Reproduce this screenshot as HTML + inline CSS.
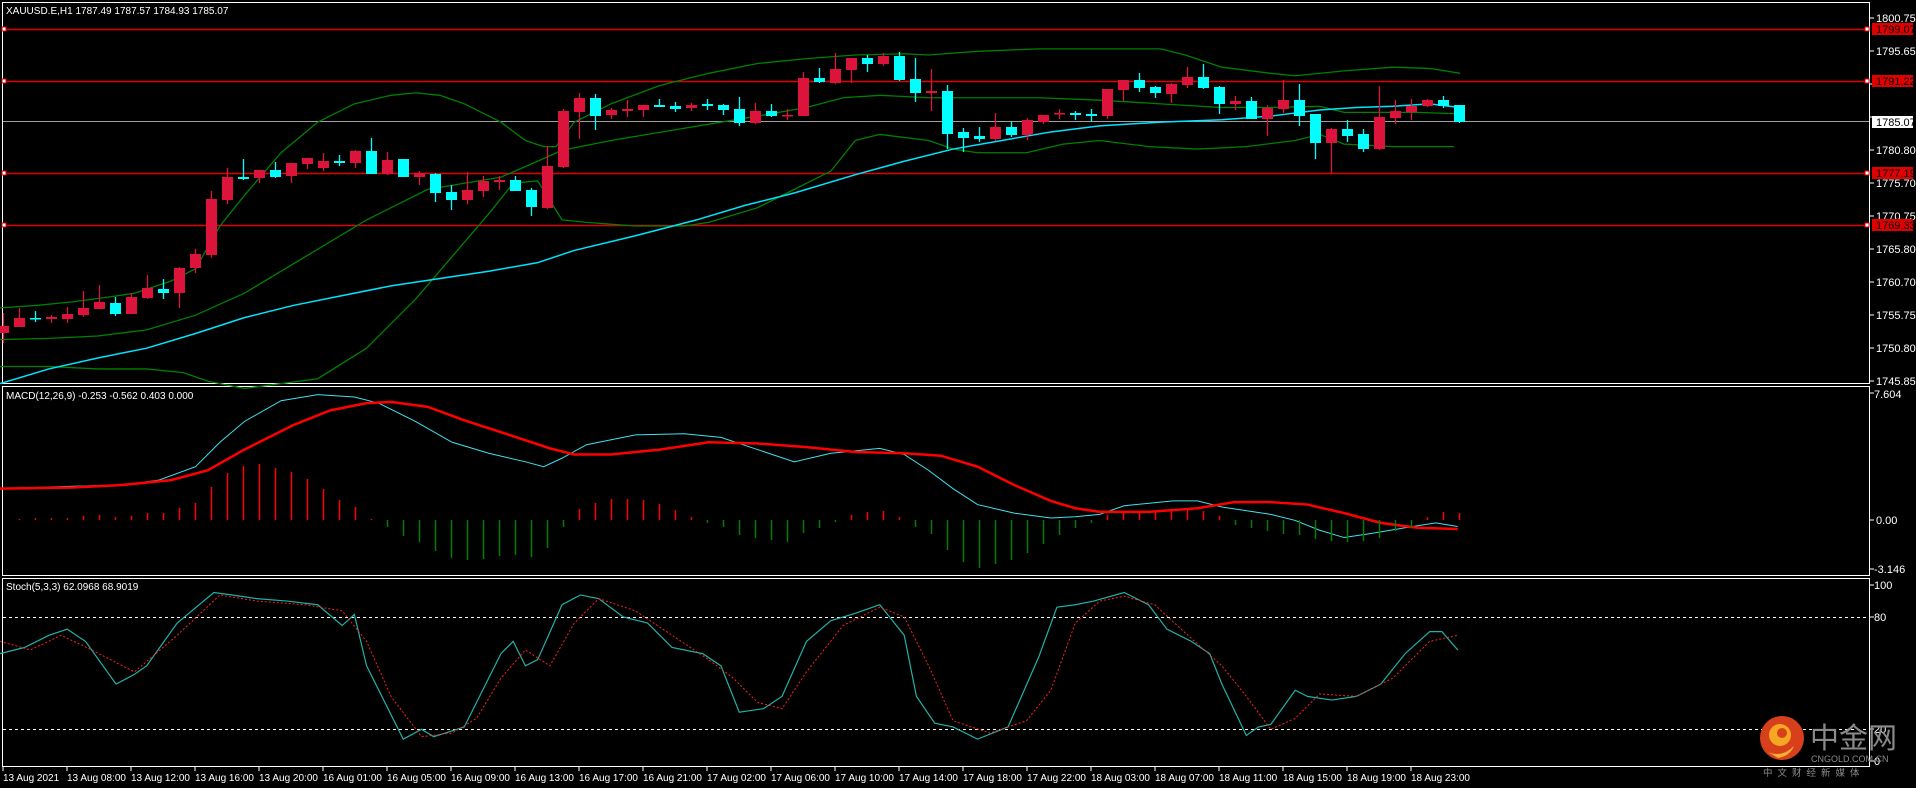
<!DOCTYPE html>
<html><head><meta charset="utf-8"><style>
html,body{margin:0;padding:0;background:#000;width:1916px;height:788px;overflow:hidden}
svg{display:block}
text{font-family:"Liberation Sans","Noto Sans CJK SC",sans-serif;font-size:11px;fill:#fff}
</style></head><body>
<svg width="1916" height="788" viewBox="0 0 1916 788" xmlns="http://www.w3.org/2000/svg">
<rect width="1916" height="788" fill="#000"/>
<g fill="none" stroke="#fff" stroke-width="1">
<rect x="2.5" y="2.5" width="1867" height="381"/>
<rect x="2.5" y="386.5" width="1867" height="189"/>
<rect x="2.5" y="578.5" width="1867" height="188"/>
</g>
<g stroke="#e00000" stroke-width="1.5">
<line x1="3" y1="29.5" x2="1869" y2="29.5"/>
<line x1="3" y1="81.5" x2="1869" y2="81.5"/>
<line x1="3" y1="173.5" x2="1869" y2="173.5"/>
<line x1="3" y1="225.5" x2="1869" y2="225.5"/>
</g>
<line x1="3" y1="121.5" x2="1869" y2="121.5" stroke="#a0a0a0" stroke-width="1"/>
<g fill="#fff" stroke="#e00000" stroke-width="1">
<rect x="2" y="27" width="4" height="4"/><rect x="2" y="79" width="4" height="4"/><rect x="2" y="171" width="4" height="4"/><rect x="2" y="223" width="4" height="4"/>
<rect x="1865" y="27" width="4" height="4"/><rect x="1865" y="79" width="4" height="4"/><rect x="1865" y="171" width="4" height="4"/><rect x="1865" y="223" width="4" height="4"/>
</g>
<g stroke="#fff" stroke-dasharray="3,3" stroke-width="1">
<line x1="3" y1="617.5" x2="1869" y2="617.5"/>
<line x1="3" y1="729.5" x2="1869" y2="729.5"/>
</g>

<g transform="scale(1.2219,1.2217)" fill="none">
<polyline vector-effect="non-scaling-stroke" stroke="#008000" stroke-width="1.3" points="0,252 30,250 60,247 90,243 110,240 140,230 160,220 180,185 200,160 230,125 260,100 290,85 320,78 340,76 360,78 380,85 410,100 430,115 445,120 455,120 470,100 500,85 540,70 580,60 620,52 660,48 700,45 740,44 760,45 800,42 850,40 900,40 950,40 970,45 1000,55 1040,60 1060,62 1100,58 1140,55 1170,56 1195,60"/>
<polyline vector-effect="non-scaling-stroke" stroke="#008000" stroke-width="1.3" points="0,278 40,277 80,275 120,270 160,258 200,240 250,210 300,180 350,155 380,150 410,145 440,132 460,123 500,115 560,105 620,95 660,88 690,80 720,78 760,80 800,80 850,80 900,82 950,85 1000,88 1040,88 1080,87 1100,92 1140,92 1160,92 1190,93"/>
<polyline vector-effect="non-scaling-stroke" stroke="#008000" stroke-width="1.3" points="0,300 40,300 80,302 120,302 150,305 170,312 200,318 260,310 300,285 340,245 370,210 400,175 420,150 440,148 460,180 480,182 520,185 560,185 580,182 620,170 650,155 680,140 700,115 720,110 760,115 780,122 800,125 840,125 870,118 900,115 940,120 980,122 1020,120 1060,115 1080,110 1100,118 1140,120 1190,120"/>
<polyline vector-effect="non-scaling-stroke" stroke="#00e5ff" stroke-width="1.5" points="0,314 40,302 80,293 120,285 160,273 200,260 240,250 280,242 320,234 360,228 400,222 440,215 470,205 520,193 570,180 610,168 650,158 700,143 740,132 780,122 820,115 860,108 900,103 950,100 1000,98 1040,95 1080,90 1110,88 1140,87 1170,85 1195,88"/>
<polyline vector-effect="non-scaling-stroke" stroke="#40e0f0" stroke-width="1" points="0,400 60,398 100,397 130,393 160,382 180,362 200,345 230,328 260,323 290,325 310,330 340,345 370,362 400,371 430,378 445,382 460,375 480,364 520,356 560,355 590,358 620,368 650,378 680,371 720,367 740,372 760,385 780,400 800,413 830,420 860,424 880,423 900,421 920,414 960,410 980,410 1000,415 1040,421 1060,426 1080,434 1100,440 1120,437 1150,432 1175,428 1193,431"/>
<polyline vector-effect="non-scaling-stroke" stroke="#ff0000" stroke-width="2.5" points="0,400 60,399 100,397 140,393 170,385 200,368 240,348 270,336 300,330 320,329 350,333 380,344 420,357 450,367 470,372 500,372 540,368 580,362 620,363 660,366 700,370 740,371 770,373 800,382 830,397 860,410 880,416 900,419 940,419 980,416 1010,411 1040,411 1070,413 1100,420 1130,428 1160,432 1193,433"/>
<polyline vector-effect="non-scaling-stroke" stroke="#20b2aa" stroke-width="1.2" points="0,535 20,530 40,520 55,515 70,525 95,560 110,552 120,545 145,510 175,485 190,487 210,490 235,492 260,495 280,512 290,503 300,545 330,605 345,597 355,603 380,595 395,565 410,535 420,525 430,545 440,540 460,495 475,487 490,490 510,505 530,510 550,530 575,535 590,545 605,583 625,580 640,570 660,525 680,508 700,502 720,495 740,520 750,570 765,592 780,595 800,605 825,595 850,538 865,497 880,495 895,492 920,485 940,495 955,515 975,525 990,535 1000,560 1020,602 1030,595 1040,593 1060,565 1070,570 1090,573 1110,570 1130,560 1150,535 1170,517 1180,517 1193,532"/>
<polyline vector-effect="non-scaling-stroke" stroke="#ff2020" stroke-width="1" stroke-dasharray="2,2" points="0,525 25,532 50,520 75,532 110,550 145,520 180,487 210,492 250,495 280,500 300,525 320,570 345,603 370,600 390,588 410,555 430,532 450,545 470,510 490,490 520,500 550,520 580,540 600,555 620,575 640,580 660,550 690,512 720,497 740,505 760,545 780,590 810,600 840,590 860,565 880,510 900,492 920,488 945,495 970,518 1000,545 1020,570 1040,597 1060,588 1080,568 1110,570 1140,555 1170,525 1193,520"/>
</g>

<path stroke="#dc143c" stroke-width="1.3" fill="none" d="M3.5 313V343M19.5 308V327M51.5 315V323M67.5 307V323M83.5 291V317M99.5 285V309M131.5 293V314M147.5 275V299M179.5 267V308M195.5 249V273M211.5 191V258M227.5 168V204M259.5 170V183M291.5 163V183M307.5 158V169M323.5 153V171M355.5 150V168M387.5 152V175M419.5 171V185M467.5 172V204M483.5 176V197M499.5 176V190M547.5 146V209M563.5 109V168M579.5 93V139M611.5 108V119M627.5 100V117M643.5 105V117M691.5 103V111M755.5 103V124M787.5 109V120M803.5 72V116M835.5 53V84M851.5 58V83M883.5 53V66M931.5 69V111M995.5 113V141M1027.5 118V140M1043.5 115V124M1059.5 109V119M1107.5 89V119M1123.5 80V101M1171.5 83V103M1187.5 67V88M1235.5 96V110M1267.5 105V136M1283.5 80V113M1331.5 128V173M1379.5 86V150M1395.5 100V124M1411.5 99V120M1427.5 99V107"/>
<path fill="#dc143c" d="M-2 326h11v7h-11zM14 318h11v9h-11zM46 317h11v2h-11zM62 314h11v5h-11zM78 308h11v7h-11zM94 302h11v7h-11zM126 297h11v17h-11zM142 288h11v10h-11zM174 268h11v25h-11zM190 254h11v14h-11zM206 199h11v56h-11zM222 177h11v23h-11zM254 170h11v8h-11zM286 163h11v13h-11zM302 158h11v6h-11zM318 161h11v7h-11zM350 151h11v12h-11zM382 160h11v14h-11zM414 173h11v4h-11zM462 190h11v10h-11zM478 181h11v10h-11zM494 180h11v2h-11zM542 166h11v42h-11zM558 111h11v56h-11zM574 98h11v14h-11zM606 110h11v5h-11zM622 109h11v2h-11zM638 105h11v5h-11zM686 105h11v3h-11zM750 111h11v12h-11zM782 115h11v1.5h-11zM798 78h11v38h-11zM830 69h11v14h-11zM846 58h11v12h-11zM878 56h11v8h-11zM926 91h11v2h-11zM990 127h11v12h-11zM1022 120h11v15h-11zM1038 115h11v7h-11zM1054 113h11v1.5h-11zM1102 89h11v27h-11zM1118 80h11v10h-11zM1166 84h11v10h-11zM1182 77h11v8h-11zM1230 101h11v3h-11zM1262 108h11v11h-11zM1278 100h11v9h-11zM1326 129h11v14h-11zM1374 117h11v32h-11zM1390 111h11v7h-11zM1406 106h11v6h-11zM1422 100h11v6h-11z"/>
<path stroke="#00ffff" stroke-width="1.3" fill="none" d="M35.5 311V322M115.5 297V316M163.5 279V299M243.5 159V180M275.5 162V178M339.5 155V166M371.5 138V174M403.5 159V177M435.5 173V202M451.5 185V210M515.5 176V191M531.5 188V216M595.5 94V130M659.5 99V107M675.5 102V112M707.5 99V110M723.5 104V115M739.5 97V126M771.5 104V117M819.5 68V83M867.5 55V72M899.5 52V81M915.5 58V102M947.5 85V149M963.5 128V152M979.5 127V142M1011.5 122V137M1075.5 111V120M1091.5 109V122M1139.5 73V92M1155.5 86V98M1203.5 64V89M1219.5 86V114M1251.5 97V119M1299.5 84V126M1315.5 114V159M1347.5 120V142M1363.5 129V152M1443.5 96V108M1459.5 105V123"/>
<path fill="#00ffff" d="M30 318h11v1.5h-11zM110 303h11v11h-11zM158 289h11v4h-11zM238 177h11v2h-11zM270 170h11v7h-11zM334 161h11v2h-11zM366 151h11v23h-11zM398 159h11v18h-11zM430 174h11v19h-11zM446 192h11v8h-11zM510 180h11v11h-11zM526 190h11v17h-11zM590 98h11v18h-11zM654 105h11v2h-11zM670 106h11v3h-11zM702 104h11v2h-11zM718 105h11v5h-11zM734 109h11v14h-11zM766 111h11v5h-11zM814 78h11v4h-11zM862 58h11v6h-11zM894 56h11v24h-11zM910 79h11v14h-11zM942 91h11v43h-11zM958 132h11v6h-11zM974 136h11v3h-11zM1006 127h11v8h-11zM1070 113h11v2h-11zM1086 114h11v2h-11zM1134 80h11v8h-11zM1150 87h11v6h-11zM1198 77h11v11h-11zM1214 87h11v17h-11zM1246 101h11v18h-11zM1294 100h11v16h-11zM1310 114h11v29h-11zM1342 129h11v7h-11zM1358 134h11v15h-11zM1438 100h11v6h-11zM1454 105h11v17h-11z"/>

<path stroke="#ff0000" stroke-width="1.5" d="M19.5 520V519M35.5 520V518M51.5 520V518M67.5 520V518M83.5 520V516M99.5 520V515M115.5 520V517M131.5 520V516M147.5 520V513M163.5 520V513M179.5 520V508M195.5 520V503M211.5 520V487M227.5 520V473M243.5 520V466M259.5 520V464M275.5 520V468M291.5 520V472M307.5 520V479M323.5 520V489M339.5 520V500M355.5 520V507M371.5 520V519M579.5 520V509M595.5 520V503M611.5 520V499M627.5 520V499M643.5 520V500M659.5 520V504M675.5 520V510M691.5 520V517M851.5 520V515M867.5 520V512M883.5 520V511M899.5 520V517M1107.5 520V515M1123.5 520V511M1139.5 520V512M1155.5 520V511M1171.5 520V511M1187.5 520V510M1203.5 520V511M1219.5 520V516M1427.5 520V517M1443.5 520V512M1459.5 520V513"/>
<path stroke="#008000" stroke-width="1.5" d="M387.5 520V527M403.5 520V536M419.5 520V542M435.5 520V551M451.5 520V558M467.5 520V560M483.5 520V559M499.5 520V556M515.5 520V555M531.5 520V557M547.5 520V548M563.5 520V527M707.5 520V523M723.5 520V527M739.5 520V535M755.5 520V538M771.5 520V540M787.5 520V542M803.5 520V533M819.5 520V528M835.5 520V522M915.5 520V527M931.5 520V534M947.5 520V550M963.5 520V562M979.5 520V568M995.5 520V564M1011.5 520V560M1027.5 520V553M1043.5 520V544M1059.5 520V535M1075.5 520V528M1091.5 520V523M1235.5 520V525M1251.5 520V528M1267.5 520V531M1283.5 520V534M1299.5 520V535M1315.5 520V539M1331.5 520V541M1347.5 520V542M1363.5 520V541M1379.5 520V538M1395.5 520V531M1411.5 520V528"/>

<g stroke="#fff" stroke-width="1">
<path d="M1870 18h4M1870 51h4M1870 84h4M1870 117h4M1870 150h4M1870 183h4M1870 216h4M1870 249h4M1870 282h4M1870 315h4M1870 348h4M1870 381h4M1870 393h4M1870 520h4M1870 569h4M1870 585h4M1870 617h4M1870 729h4M1870 761h4"/>
<path d="M3 767v4M67 767v4M131 767v4M195 767v4M259 767v4M323 767v4M387 767v4M451 767v4M515 767v4M579 767v4M643 767v4M707 767v4M771 767v4M835 767v4M899 767v4M963 767v4M1027 767v4M1091 767v4M1155 767v4M1219 767v4M1283 767v4M1347 767v4M1411 767v4"/>
</g>
<g>
<text x="1876" y="22">1800.75</text>
<text x="1876" y="55">1795.65</text>
<text x="1876" y="154">1780.80</text>
<text x="1876" y="187">1775.70</text>
<text x="1876" y="220">1770.75</text>
<text x="1876" y="253">1765.80</text>
<text x="1876" y="286">1760.70</text>
<text x="1876" y="319">1755.75</text>
<text x="1876" y="352">1750.80</text>
<text x="1876" y="385">1745.85</text>
</g>
<rect x="1872" y="23" width="41" height="12" fill="#e00000"/><text x="1876" y="33" style="fill:#000">1799.07</text>
<rect x="1872" y="75" width="41" height="12" fill="#e00000"/><text x="1876" y="85" style="fill:#000">1791.22</text>
<rect x="1872" y="116" width="41" height="12" fill="#fff"/><text x="1876" y="126" style="fill:#000">1785.07</text>
<rect x="1872" y="167" width="41" height="12" fill="#e00000"/><text x="1876" y="177" style="fill:#000">1777.19</text>
<rect x="1872" y="219" width="41" height="12" fill="#e00000"/><text x="1876" y="229" style="fill:#000">1769.33</text>
<text x="1874" y="398">7.604</text>
<text x="1876" y="524">0.00</text>
<text x="1874" y="573">-3.146</text>
<text x="1874" y="589">100</text>
<text x="1874" y="621">80</text>
<text x="1874" y="733">20</text>
<text x="1874" y="765">0</text>
<text x="6" y="14" style="font-size:10px">XAUUSD.E,H1  1787.49 1787.57 1784.93 1785.07</text>
<text x="6" y="399" style="font-size:10px">MACD(12,26,9) -0.253 -0.562 0.403 0.000</text>
<text x="6" y="590" style="font-size:10px">Stoch(5,3,3) 62.0968 68.9019</text>
<g>
<text x="3" y="781" style="font-size:10px">13 Aug 2021</text>
<text x="67" y="781" style="font-size:10px">13 Aug 08:00</text>
<text x="131" y="781" style="font-size:10px">13 Aug 12:00</text>
<text x="195" y="781" style="font-size:10px">13 Aug 16:00</text>
<text x="259" y="781" style="font-size:10px">13 Aug 20:00</text>
<text x="323" y="781" style="font-size:10px">16 Aug 01:00</text>
<text x="387" y="781" style="font-size:10px">16 Aug 05:00</text>
<text x="451" y="781" style="font-size:10px">16 Aug 09:00</text>
<text x="515" y="781" style="font-size:10px">16 Aug 13:00</text>
<text x="579" y="781" style="font-size:10px">16 Aug 17:00</text>
<text x="643" y="781" style="font-size:10px">16 Aug 21:00</text>
<text x="707" y="781" style="font-size:10px">17 Aug 02:00</text>
<text x="771" y="781" style="font-size:10px">17 Aug 06:00</text>
<text x="835" y="781" style="font-size:10px">17 Aug 10:00</text>
<text x="899" y="781" style="font-size:10px">17 Aug 14:00</text>
<text x="963" y="781" style="font-size:10px">17 Aug 18:00</text>
<text x="1027" y="781" style="font-size:10px">17 Aug 22:00</text>
<text x="1091" y="781" style="font-size:10px">18 Aug 03:00</text>
<text x="1155" y="781" style="font-size:10px">18 Aug 07:00</text>
<text x="1219" y="781" style="font-size:10px">18 Aug 11:00</text>
<text x="1283" y="781" style="font-size:10px">18 Aug 15:00</text>
<text x="1347" y="781" style="font-size:10px">18 Aug 19:00</text>
<text x="1411" y="781" style="font-size:10px">18 Aug 23:00</text>
</g>
<circle cx="1782" cy="738" r="22" fill="#d8401c"/>
<circle cx="1780" cy="735" r="11" fill="#f5a623"/>
<circle cx="1782" cy="733" r="5" fill="#d8401c"/>
<path d="M1768 752 q14 6 26 -6 q-4 10 -16 12z" fill="#f5b030"/>
<text x="1810" y="748" style="font-size:29px;fill:#8a8a8a;font-family:'Noto Sans CJK SC',sans-serif">中金网</text>
<text x="1811" y="762" style="font-size:9px;fill:#8a8a8a">CNGOLD.COM.CN</text>
<text x="1763" y="776" style="font-size:9.5px;fill:#8a8a8a;letter-spacing:5px;font-family:'Noto Sans CJK SC',sans-serif">中文财经新媒体</text>
</svg>
</body></html>
